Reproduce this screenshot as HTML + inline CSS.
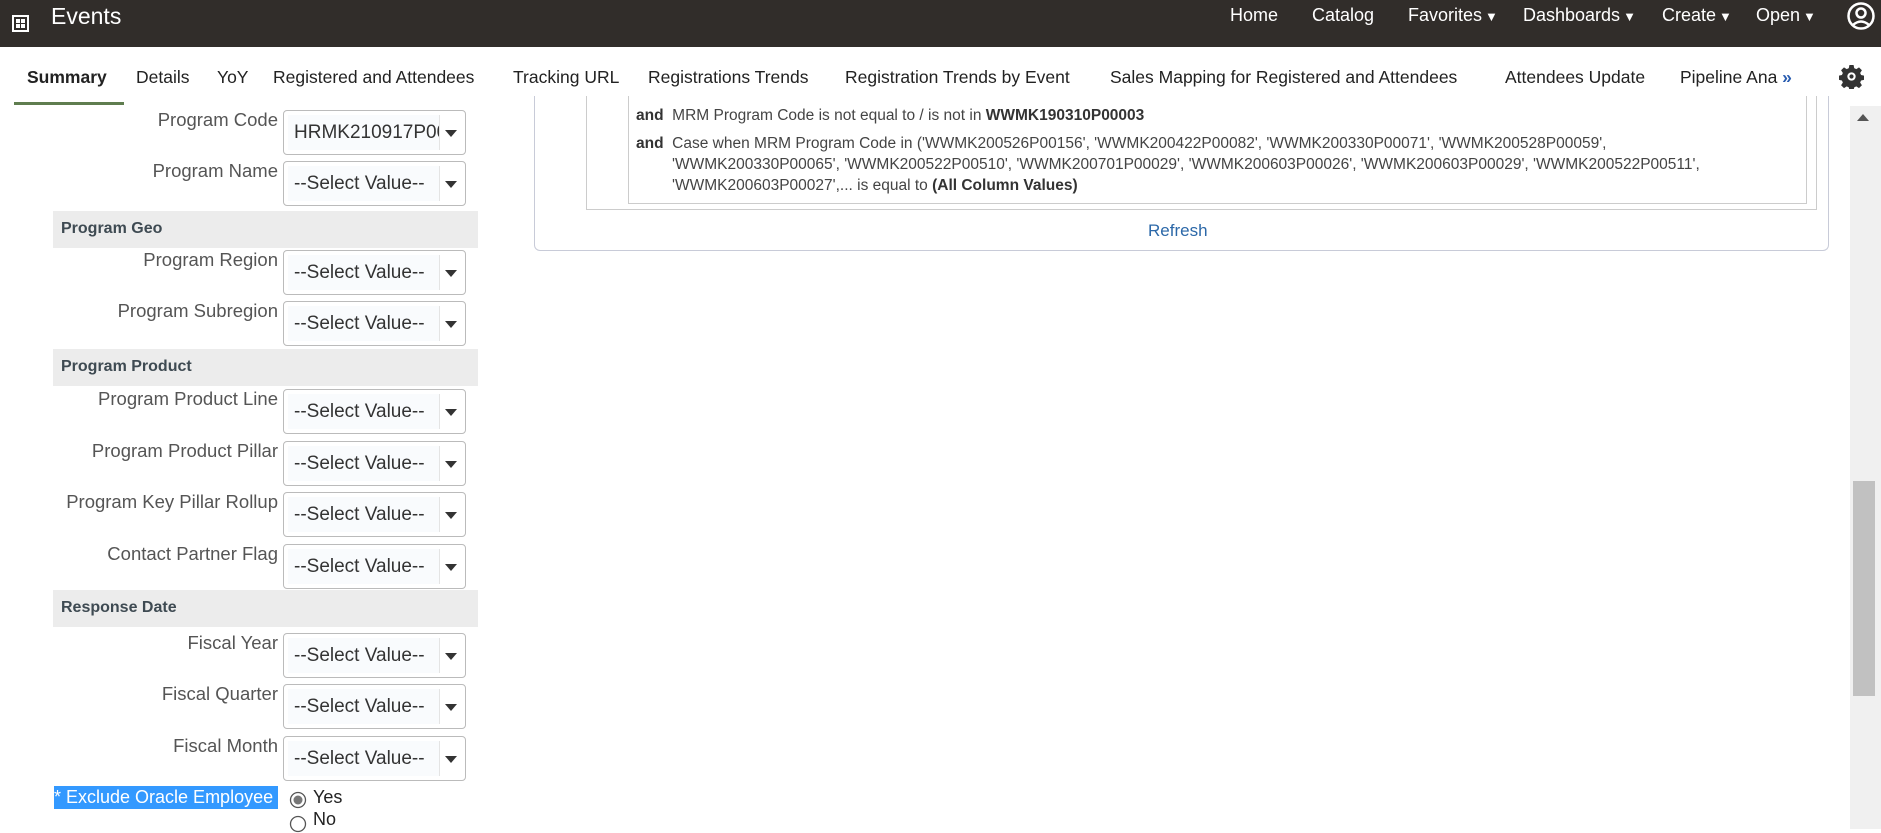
<!DOCTYPE html>
<html><head><meta charset="utf-8"><style>
*{box-sizing:border-box;margin:0;padding:0}
body{width:1881px;height:829px;overflow:hidden;background:#fff;font-family:"Liberation Sans",sans-serif;position:relative;color:#333}
.hdr{position:absolute;left:0;top:0;width:1881px;height:47px;background:#312d2a}
.hdr .t{position:absolute;top:3px;color:#fff;font-size:23px}
.nav{position:absolute;top:5px;color:#fff;font-size:18px}
.nav .c{font-size:13px;margin-left:3px}
.tab{position:absolute;top:67px;font-size:17.5px;color:#222;white-space:nowrap}
.lbl{position:absolute;right:1603px;font-size:18.5px;color:#555;text-align:right;white-space:nowrap}
.sel{position:absolute;left:283px;width:183px;height:45px;border:1px solid #bbb;border-radius:4px;background:#fff}
.sel .in{position:absolute;left:4px;top:4px;width:152px;height:35px;background:#f9fbfd;border-right:1px solid #e4e4e4;font-size:19px;color:#333;padding:7px 0 0 6px;white-space:nowrap;overflow:hidden}
.sel .ar{position:absolute;right:8px;top:19px;width:0;height:0;border-left:6px solid transparent;border-right:6px solid transparent;border-top:7px solid #333}
.sec{position:absolute;left:53px;width:425px;height:37px;background:#ececec;font-weight:bold;font-size:16px;color:#3e4a52;padding:9px 0 0 8px}
.ln{position:absolute;left:636px;font-size:15.5px;color:#444;white-space:nowrap}
.ln b{color:#333}
</style></head><body>
<div class="hdr">
<svg style="position:absolute;left:12px;top:15px" width="17" height="17" viewBox="0 0 17 17"><rect x="1" y="1" width="15" height="15" fill="none" stroke="#fff" stroke-width="2"/><rect x="4" y="4" width="4" height="4" fill="#fff"/><rect x="9" y="4" width="4" height="4" fill="#fff"/><rect x="4" y="9" width="4" height="4" fill="#fff"/><rect x="9" y="9" width="4" height="4" fill="#fff"/></svg>
<div class="t" style="left:51px">Events</div>
<div class="nav" style="left:1230px">Home</div>
<div class="nav" style="left:1312px">Catalog</div>
<div class="nav" style="left:1408px">Favorites<span class="c">▼</span></div>
<div class="nav" style="left:1523px">Dashboards<span class="c">▼</span></div>
<div class="nav" style="left:1662px">Create<span class="c">▼</span></div>
<div class="nav" style="left:1756px">Open<span class="c">▼</span></div>
<svg style="position:absolute;left:1847px;top:1px" width="28" height="30" viewBox="0 0 28 30"><circle cx="14" cy="15" r="12.5" fill="none" stroke="#fff" stroke-width="2.5"/><circle cx="14" cy="12" r="4.5" fill="none" stroke="#fff" stroke-width="2.5"/><path d="M6 24 Q14 17 22 24" fill="none" stroke="#fff" stroke-width="2.5"/></svg>
</div>
<div class="tab" style="left:27px;font-weight:bold">Summary</div>
<div style="position:absolute;left:14px;top:102px;width:110px;height:3px;background:#5f7d4f"></div>
<div class="tab" style="left:136px">Details</div>
<div class="tab" style="left:217px">YoY</div>
<div class="tab" style="left:273px">Registered and Attendees</div>
<div class="tab" style="left:513px">Tracking URL</div>
<div class="tab" style="left:648px">Registrations Trends</div>
<div class="tab" style="left:845px">Registration Trends by Event</div>
<div class="tab" style="left:1110px">Sales Mapping for Registered and Attendees</div>
<div class="tab" style="left:1505px">Attendees Update</div>
<div class="tab" style="left:1680px">Pipeline Ana<span style="color:#2a5db0;font-weight:bold"> »</span></div>
<svg style="position:absolute;left:1839px;top:64px" width="25" height="25" viewBox="0 0 24 24"><path fill="#333" d="M10 1h4l.6 3 2 .9 2.6-1.7 2.8 2.8-1.7 2.6.9 2 3 .6v4l-3 .6-.9 2 1.7 2.6-2.8 2.8-2.6-1.7-2 .9-.6 3h-4l-.6-3-2-.9-2.6 1.7-2.8-2.8 1.7-2.6-.9-2-3-.6v-4l3-.6.9-2-1.7-2.6 2.8-2.8 2.6 1.7 2-.9z"/><circle cx="12" cy="12" r="4" fill="#fff"/><circle cx="12" cy="12" r="2" fill="#333"/></svg>

<div style="position:absolute;left:534px;top:96px;width:1295px;height:155px;border:1px solid #c8cbd8;border-top:none;border-radius:0 0 6px 6px"></div>
<div style="position:absolute;left:586px;top:96px;width:1231px;height:114px;border:1px solid #ccc;border-top:none"></div>
<div style="position:absolute;left:628px;top:96px;width:1179px;height:108px;border:1px solid #ccc;border-top:none"></div>
<div class="ln" style="top:107px"><b>and</b>&nbsp; MRM Program Code is not equal to / is not in <b>WWMK190310P00003</b></div>
<div class="ln" style="top:135px"><b>and</b>&nbsp; Case when MRM Program Code in ('WWMK200526P00156', 'WWMK200422P00082', 'WWMK200330P00071', 'WWMK200528P00059',</div>
<div class="ln" style="top:156px;left:672px">'WWMK200330P00065', 'WWMK200522P00510', 'WWMK200701P00029', 'WWMK200603P00026', 'WWMK200603P00029', 'WWMK200522P00511',</div>
<div class="ln" style="top:177px;left:672px">'WWMK200603P00027',... is equal to <b>(All Column Values)</b></div>
<div style="position:absolute;left:1148px;top:221px;font-size:17px;color:#2c68a8">Refresh</div>

<div style="position:absolute;left:1850px;top:106px;width:31px;height:723px;background:#f0f0f0"></div>
<div style="position:absolute;left:1857px;top:114px;width:0;height:0;border-left:6px solid transparent;border-right:6px solid transparent;border-bottom:7px solid #555"></div>
<div style="position:absolute;left:1853px;top:481px;width:22px;height:215px;background:#c1c1c1"></div>

<div class="lbl" style="top:109px">Program Code</div>
<div class="sel" style="top:110px"><div class="in">HRMK210917P00</div><div class="ar"></div></div>
<div class="lbl" style="top:160px">Program Name</div>
<div class="sel" style="top:161px"><div class="in">--Select Value--</div><div class="ar"></div></div>
<div class="sec" style="top:211px">Program Geo</div>
<div class="lbl" style="top:249px">Program Region</div>
<div class="sel" style="top:250px"><div class="in">--Select Value--</div><div class="ar"></div></div>
<div class="lbl" style="top:300px">Program Subregion</div>
<div class="sel" style="top:301px"><div class="in">--Select Value--</div><div class="ar"></div></div>
<div class="sec" style="top:349px">Program Product</div>
<div class="lbl" style="top:388px">Program Product Line</div>
<div class="sel" style="top:389px"><div class="in">--Select Value--</div><div class="ar"></div></div>
<div class="lbl" style="top:440px">Program Product Pillar</div>
<div class="sel" style="top:441px"><div class="in">--Select Value--</div><div class="ar"></div></div>
<div class="lbl" style="top:491px">Program Key Pillar Rollup</div>
<div class="sel" style="top:492px"><div class="in">--Select Value--</div><div class="ar"></div></div>
<div class="lbl" style="top:543px">Contact Partner Flag</div>
<div class="sel" style="top:544px"><div class="in">--Select Value--</div><div class="ar"></div></div>
<div class="sec" style="top:590px">Response Date</div>
<div class="lbl" style="top:632px">Fiscal Year</div>
<div class="sel" style="top:633px"><div class="in">--Select Value--</div><div class="ar"></div></div>
<div class="lbl" style="top:683px">Fiscal Quarter</div>
<div class="sel" style="top:684px"><div class="in">--Select Value--</div><div class="ar"></div></div>
<div class="lbl" style="top:735px">Fiscal Month</div>
<div class="sel" style="top:736px"><div class="in">--Select Value--</div><div class="ar"></div></div>
<div style="position:absolute;left:54px;top:786px;width:224px;height:23px;background:#3399ff;color:#fff;font-size:18px;padding-top:1px;white-space:nowrap;overflow:hidden">* Exclude Oracle Employee</div>
<svg style="position:absolute;left:289px;top:791px" width="18" height="18"><circle cx="9" cy="9" r="7.5" fill="#fff" stroke="#555" stroke-width="1.3"/><circle cx="9" cy="9" r="4.5" fill="#777"/></svg>
<div style="position:absolute;left:313px;top:787px;font-size:18px;color:#222">Yes</div>
<svg style="position:absolute;left:289px;top:815px" width="18" height="18"><circle cx="9" cy="9" r="7.5" fill="#fff" stroke="#555" stroke-width="1.3"/></svg>
<div style="position:absolute;left:313px;top:809px;font-size:18px;color:#222">No</div>
</body></html>
